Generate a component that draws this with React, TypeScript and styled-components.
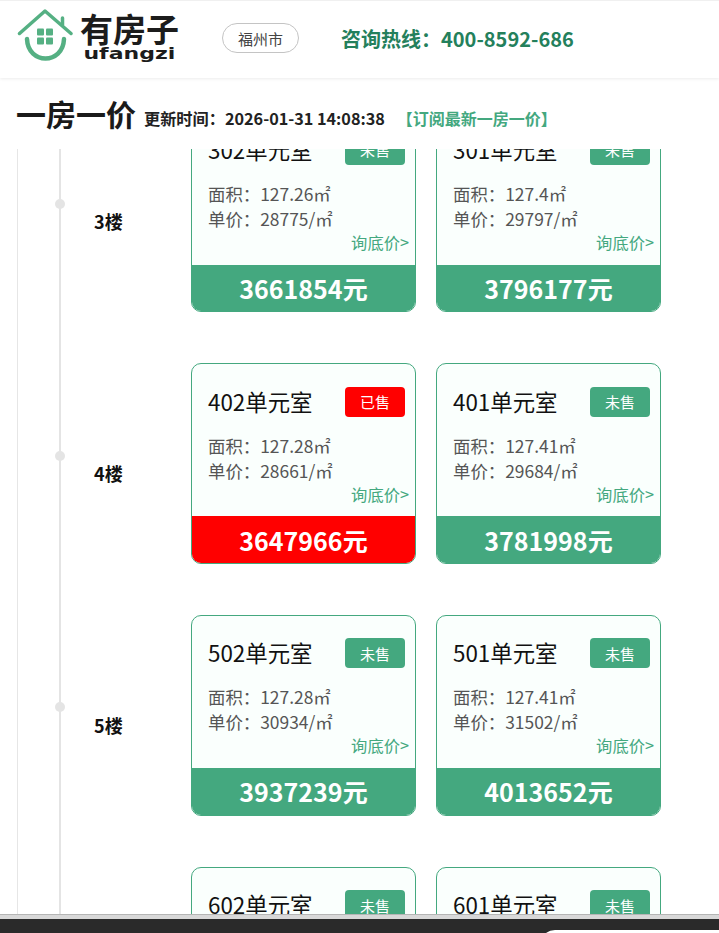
import React from 'react';
import styled, { createGlobalStyle } from 'styled-components';

const GlobalStyle = createGlobalStyle`
  html, body {
    margin: 0;
    padding: 0;
    height: 100%;
    overflow: hidden;
    background: #fff;
    font-family: "Noto Sans CJK SC", "Noto Sans", sans-serif;
  }
`;

const GREEN = '#44a87f';

const Page = styled.div`
  width: 719px;
  height: 933px;
  display: flex;
  flex-direction: column;
  overflow: hidden;
`;

const Header = styled.header`
  height: 77px;
  flex: none;
  border-top: 1px solid #f0f0f0;
  box-shadow: 0 1px 3px rgba(0, 0, 0, 0.08);
  display: flex;
  align-items: center;
  padding-left: 17px;
`;

const Logo = styled.div`
  width: 205px;
  display: flex;
  align-items: flex-start;
  gap: 7px;
  height: 62px;
`;

const LogoText = styled.div`
  display: flex;
  flex-direction: column;
  align-items: center;
  color: #1c1c1c;
  padding-top: 2px;
`;

const LogoName = styled.div`
  font-size: 33px;
  line-height: 35px;
  font-weight: 700;
`;

const LogoLatin = styled.div`
  font-family: "DejaVu Sans", sans-serif;
  font-size: 15.5px;
  line-height: 17px;
  font-weight: 700;
  transform: scaleX(1.42);
`;

const City = styled.div`
  width: 75px;
  height: 28px;
  margin-bottom: 3px;
  border: 1px solid #c4c4c4;
  border-radius: 15px;
  font-size: 15px;
  color: #444;
  display: flex;
  align-items: center;
  justify-content: center;
`;

const Hotline = styled.div`
  margin: 0 0 2px 42px;
  font-size: 20px;
  font-weight: 700;
  color: #24805c;
`;

const TitleRow = styled.div`
  height: 71px;
  flex: none;
  display: flex;
  align-items: flex-start;
  padding: 15px 0 0 16px;
  box-sizing: border-box;
`;

const Title = styled.h1`
  margin: 0;
  font-size: 30px;
  line-height: 40px;
  font-weight: 700;
  color: #1a1a1a;
`;

const Updated = styled.span`
  margin: 13px 0 0 8px;
  font-size: 16.2px;
  line-height: 24px;
  font-weight: 700;
  color: #222;
`;

const Subscribe = styled.span`
  margin: 13px 0 0 12px;
  font-size: 16px;
  line-height: 24px;
  font-weight: 700;
  color: ${GREEN};
`;

const Viewport = styled.div`
  flex: 1;
  min-height: 0;
  overflow: hidden;
  margin-left: 17px;
  width: 644px;
  border-left: 1px solid #e6e6e6;
`;

const Timeline = styled.div`
  margin-top: -37.5px;
  display: flex;
  flex-direction: column;
  gap: 51.25px;
`;

const FloorRow = styled.div`
  display: flex;
  height: 200.5px;
  position: relative;

  &::before {
    content: '';
    position: absolute;
    left: 41px;
    top: -52px;
    bottom: 0;
    width: 2px;
    background: #e4e4e4;
  }
`;

const Dot = styled.span`
  position: absolute;
  left: 37px;
  top: 87.3px;
  width: 10px;
  height: 10px;
  border-radius: 50%;
  background: #e4e4e4;
`;

const FloorLabel = styled.div`
  width: 173px;
  padding: 96.5px 0 0 76px;
  box-sizing: border-box;
  font-size: 18px;
  line-height: 26px;
  font-weight: 700;
  color: #111;
`;

const Cards = styled.div`
  display: flex;
  gap: 20px;
`;

const Card = styled.div`
  width: 225px;
  height: 200.5px;
  box-sizing: border-box;
  border: 1px solid ${GREEN};
  border-radius: 10px;
  background: #fafffd;
  overflow: hidden;
  display: flex;
  flex-direction: column;
`;

const CardTop = styled.div`
  height: 152.2px;
  flex: none;
  box-sizing: border-box;
  padding: 22.3px 6px 0 16px;
`;

const NameRow = styled.div`
  display: flex;
  justify-content: space-between;
  align-items: flex-start;
  height: 30px;
  padding-right: 4px;
`;

const RoomName = styled.div`
  font-size: 22.4px;
  line-height: 28px;
  color: #111;
`;

const Status = styled.div<{ $sold: boolean }>`
  width: 60px;
  height: 30px;
  border-radius: 4px;
  background: ${(p) => (p.$sold ? '#ff0000' : GREEN)};
  color: #fff;
  font-size: 15px;
  display: flex;
  align-items: center;
  justify-content: center;
`;

const Spec = styled.div`
  font-size: 17.4px;
  line-height: 25px;
  color: #555;

  ${NameRow} + & {
    margin-top: 16px;
  }
`;

const Inquire = styled.div`
  text-align: right;
  font-size: 16.3px;
  line-height: 22px;
  color: ${GREEN};
`;

const Price = styled.div<{ $sold: boolean }>`
  flex: 1;
  background: ${(p) => (p.$sold ? '#ff0000' : GREEN)};
  color: #fff;
  font-size: 25px;
  font-weight: 700;
  display: flex;
  align-items: center;
  justify-content: center;
`;

const BottomBar = styled.div`
  height: 19px;
  flex: none;
  box-sizing: border-box;
  border-top: 1px solid #b5b5b5;
  background: linear-gradient(#d8d8d8 0 4px, #2a2a2a 4px);
  position: relative;
  overflow: hidden;
`;

const Pill = styled.span`
  position: absolute;
  left: 540px;
  top: 15px;
  width: 200px;
  height: 30px;
  border-radius: 15px;
  background: #fff;
`;

interface Unit {
  room: string;
  area: string;
  unitPrice: number;
  total: number;
  sold?: boolean;
}

const floors: { floor: number; units: Unit[] }[] = [
  {
    floor: 3,
    units: [
      { room: '302', area: '127.26', unitPrice: 28775, total: 3661854 },
      { room: '301', area: '127.4', unitPrice: 29797, total: 3796177 },
    ],
  },
  {
    floor: 4,
    units: [
      { room: '402', area: '127.28', unitPrice: 28661, total: 3647966, sold: true },
      { room: '401', area: '127.41', unitPrice: 29684, total: 3781998 },
    ],
  },
  {
    floor: 5,
    units: [
      { room: '502', area: '127.28', unitPrice: 30934, total: 3937239 },
      { room: '501', area: '127.41', unitPrice: 31502, total: 4013652 },
    ],
  },
  {
    floor: 6,
    units: [
      { room: '602', area: '127.28', unitPrice: 31200, total: 3971136 },
      { room: '601', area: '127.41', unitPrice: 31800, total: 4051638 },
    ],
  },
];

const LogoMark = () => (
  <svg width="56" height="58" viewBox="0 0 56 58" fill="none" aria-hidden="true">
    <path d="M2.5 24.5 L28 2 L54 24.5" stroke="#55b083" strokeWidth="3.5" strokeLinecap="round" strokeLinejoin="round" />
    <path d="M45.5 9 V16" stroke="#55b083" strokeWidth="3.5" strokeLinecap="round" />
    <path d="M10 30 C11 56 46 56 47 30" stroke="#55b083" strokeWidth="4.5" strokeLinecap="round" />
    <g fill="#55b083">
      <rect x="20" y="19.5" width="7" height="7" rx="1" />
      <rect x="29" y="19.5" width="7" height="7" rx="1" />
      <rect x="20" y="28.5" width="7" height="7" rx="1" />
      <rect x="29" y="28.5" width="7" height="7" rx="1" />
    </g>
  </svg>
);

const UnitCard = ({ unit }: { unit: Unit }) => {
  const sold = !!unit.sold;
  return (
    <Card>
      <CardTop>
        <NameRow>
          <RoomName>{unit.room}单元室</RoomName>
          <Status $sold={sold}>{sold ? '已售' : '未售'}</Status>
        </NameRow>
        <Spec>面积：{unit.area}㎡</Spec>
        <Spec>单价：{unit.unitPrice}/㎡</Spec>
        <Inquire>询底价&gt;</Inquire>
      </CardTop>
      <Price $sold={sold}>{unit.total}元</Price>
    </Card>
  );
};

export default function App() {
  return (
    <Page>
      <GlobalStyle />
      <Header>
        <Logo>
          <LogoMark />
          <LogoText>
            <LogoName>有房子</LogoName>
            <LogoLatin>ufangzi</LogoLatin>
          </LogoText>
        </Logo>
        <City>福州市</City>
        <Hotline>咨询热线：400-8592-686</Hotline>
      </Header>
      <TitleRow>
        <Title>一房一价</Title>
        <Updated>更新时间：2026-01-31 14:08:38</Updated>
        <Subscribe>【订阅最新一房一价】</Subscribe>
      </TitleRow>
      <Viewport>
        <Timeline>
          {floors.map((f) => (
            <FloorRow key={f.floor}>
              <Dot />
              <FloorLabel>{f.floor}楼</FloorLabel>
              <Cards>
                {f.units.map((u) => (
                  <UnitCard key={u.room} unit={u} />
                ))}
              </Cards>
            </FloorRow>
          ))}
        </Timeline>
      </Viewport>
      <BottomBar>
        <Pill />
      </BottomBar>
    </Page>
  );
}
